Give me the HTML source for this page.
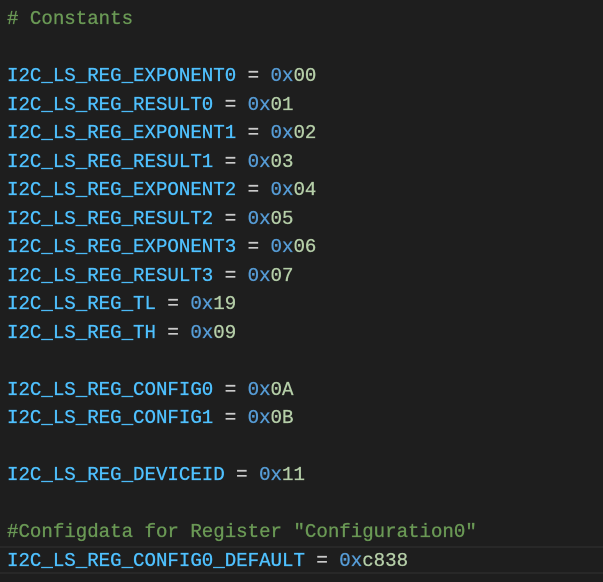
<!DOCTYPE html>
<html><head><style>
body{margin:0;width:603px;height:582px;background:#1e1e1e;overflow:hidden;}
.c{position:absolute;left:7px;top:5px;font-family:"Liberation Mono",monospace;font-size:19.1px;line-height:28.5px;white-space:pre;color:#d4d4d4;-webkit-text-stroke:0.3px;}
.v{color:#4fc1ff}.k{color:#569cd6}.n{color:#b5cea8}.m{color:#6a9955}
.hl{position:absolute;left:0;top:546px;width:603px;height:28px;border-top:2px solid #282828;border-bottom:2px solid #282828;box-sizing:border-box;}
</style></head><body>
<div class="hl"></div>
<div class="c"><span class="m"># Constants</span>

<span class="v">I2C_LS_REG_EXPONENT0</span> = <span class="k">0x</span><span class="n">00</span>
<span class="v">I2C_LS_REG_RESULT0</span> = <span class="k">0x</span><span class="n">01</span>
<span class="v">I2C_LS_REG_EXPONENT1</span> = <span class="k">0x</span><span class="n">02</span>
<span class="v">I2C_LS_REG_RESULT1</span> = <span class="k">0x</span><span class="n">03</span>
<span class="v">I2C_LS_REG_EXPONENT2</span> = <span class="k">0x</span><span class="n">04</span>
<span class="v">I2C_LS_REG_RESULT2</span> = <span class="k">0x</span><span class="n">05</span>
<span class="v">I2C_LS_REG_EXPONENT3</span> = <span class="k">0x</span><span class="n">06</span>
<span class="v">I2C_LS_REG_RESULT3</span> = <span class="k">0x</span><span class="n">07</span>
<span class="v">I2C_LS_REG_TL</span> = <span class="k">0x</span><span class="n">19</span>
<span class="v">I2C_LS_REG_TH</span> = <span class="k">0x</span><span class="n">09</span>

<span class="v">I2C_LS_REG_CONFIG0</span> = <span class="k">0x</span><span class="n">0A</span>
<span class="v">I2C_LS_REG_CONFIG1</span> = <span class="k">0x</span><span class="n">0B</span>

<span class="v">I2C_LS_REG_DEVICEID</span> = <span class="k">0x</span><span class="n">11</span>

<span class="m">#Configdata for Register "Configuration0"</span>
<span class="v">I2C_LS_REG_CONFIG0_DEFAULT</span> = <span class="k">0x</span><span class="n">c838</span>
</div>
</body></html>
